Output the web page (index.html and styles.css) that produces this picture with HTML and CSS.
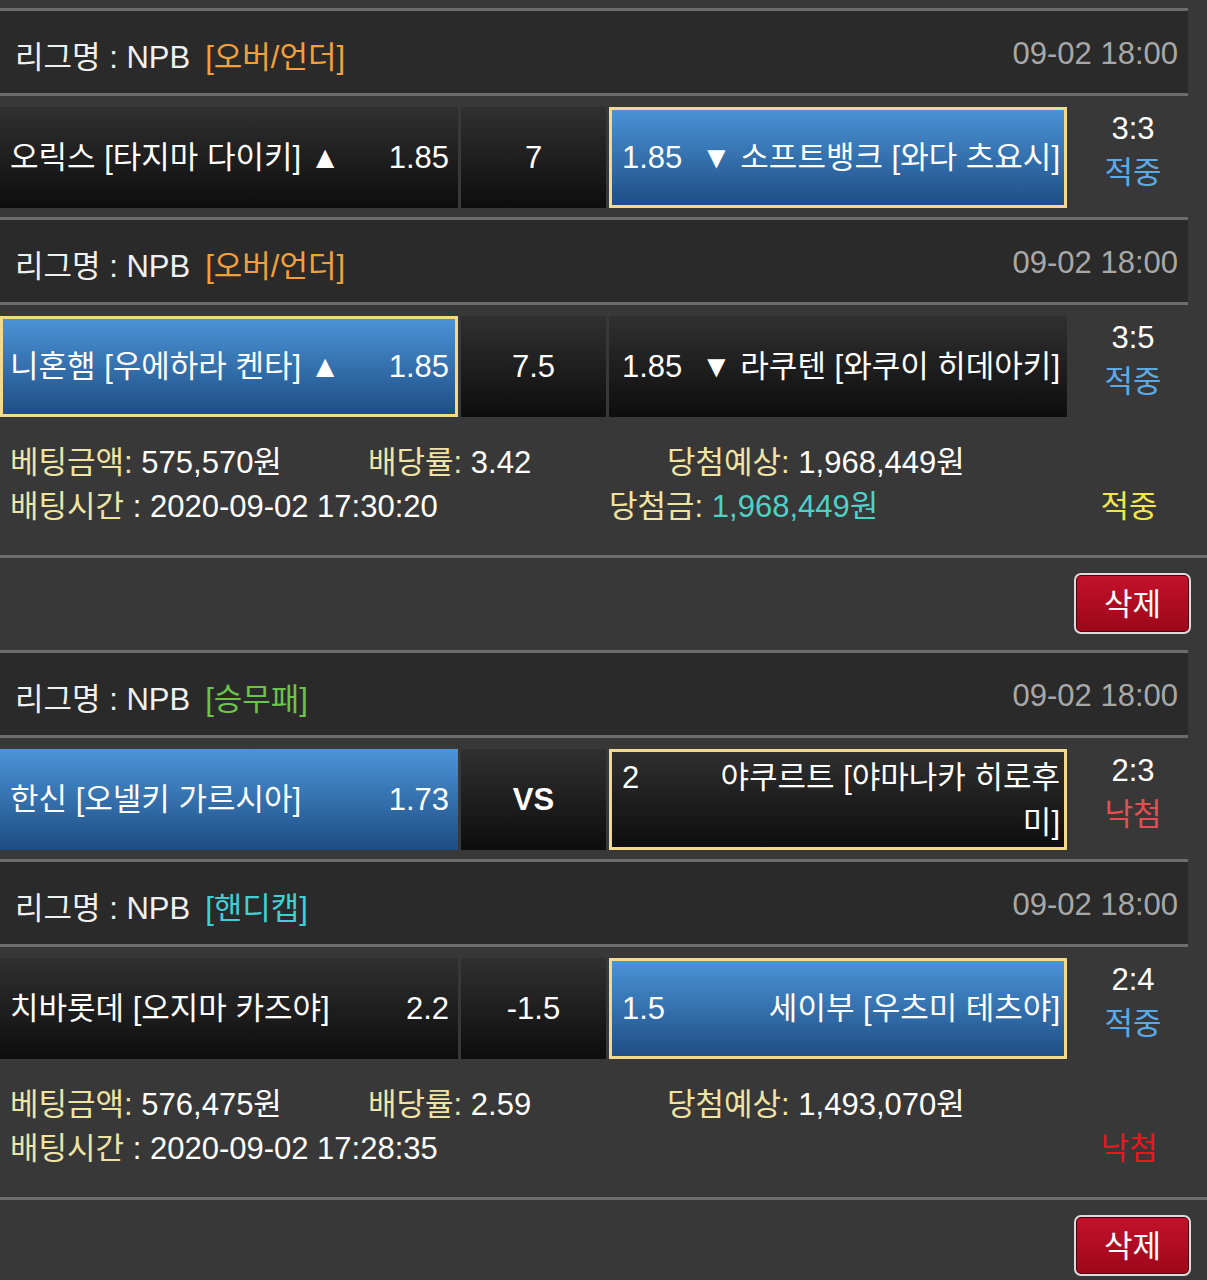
FILE: index.html
```html
<!DOCTYPE html>
<html lang="ko">
<head>
  <meta charset="UTF-8" />
  <title>배팅내역</title>
  <link rel="stylesheet" href="styles.css">
</head>
<body>
  <!-- 배팅 1 -->
  <div class="slip">
    <div class="league">
      <span>리그명 : NPB</span><span class="type ou">[오버/언더]</span>
      <span class="date">09-02 18:00</span>
    </div>
    <div class="match">
      <div class="cell home"><span class="team">오릭스 [타지마 다이키] ▲</span><span class="odd">1.85</span></div>
      <div class="cell mid">7</div>
      <div class="cell away pick win"><span class="odd">1.85</span><span class="team">▼ 소프트뱅크 [와다 츠요시]</span></div>
      <div class="score"><span>3:3</span><span class="hit">적중</span></div>
    </div>

    <div class="league">
      <span>리그명 : NPB</span><span class="type ou">[오버/언더]</span>
      <span class="date">09-02 18:00</span>
    </div>
    <div class="match">
      <div class="cell home pick win"><span class="team">니혼햄 [우에하라 켄타] ▲</span><span class="odd">1.85</span></div>
      <div class="cell mid">7.5</div>
      <div class="cell away"><span class="odd">1.85</span><span class="team">▼ 라쿠텐 [와쿠이 히데아키]</span></div>
      <div class="score"><span>3:5</span><span class="hit">적중</span></div>
    </div>

    <div class="info">
      <div class="info-row">
        <span class="amount"><em>베팅금액:</em> 575,570원</span>
        <span class="rate"><em>배당률:</em> 3.42</span>
        <span><em>당첨예상:</em> 1,968,449원</span>
      </div>
      <div class="info-row">
        <span class="time"><em>배팅시간</em> : 2020-09-02 17:30:20</span>
        <span class="payout"><em>당첨금:</em> <span class="money">1,968,449원</span></span>
        <span class="result win">적중</span>
      </div>
    </div>
  </div>
  <div class="del-bar"><button class="btn-del">삭제</button></div>

  <!-- 배팅 2 -->
  <div class="slip">
    <div class="league">
      <span>리그명 : NPB</span><span class="type wdl">[승무패]</span>
      <span class="date">09-02 18:00</span>
    </div>
    <div class="match">
      <div class="cell home pick"><span class="team">한신 [오넬키 가르시아]</span><span class="odd">1.73</span></div>
      <div class="cell mid vs">VS</div>
      <div class="cell away win"><span class="odd">2</span><span class="team">야쿠르트 [야마나카 히로후미]</span></div>
      <div class="score"><span>2:3</span><span class="miss">낙첨</span></div>
    </div>

    <div class="league">
      <span>리그명 : NPB</span><span class="type hc">[핸디캡]</span>
      <span class="date">09-02 18:00</span>
    </div>
    <div class="match">
      <div class="cell home"><span class="team">치바롯데 [오지마 카즈야]</span><span class="odd">2.2</span></div>
      <div class="cell mid">-1.5</div>
      <div class="cell away pick win"><span class="odd">1.5</span><span class="team">세이부 [우츠미 테츠야]</span></div>
      <div class="score"><span>2:4</span><span class="hit">적중</span></div>
    </div>

    <div class="info">
      <div class="info-row">
        <span class="amount"><em>베팅금액:</em> 576,475원</span>
        <span class="rate"><em>배당률:</em> 2.59</span>
        <span><em>당첨예상:</em> 1,493,070원</span>
      </div>
      <div class="info-row">
        <span class="time"><em>배팅시간</em> : 2020-09-02 17:28:35</span>
        <span class="payout"></span>
        <span class="result lose">낙첨</span>
      </div>
    </div>
  </div>
  <div class="del-bar"><button class="btn-del">삭제</button></div>
</body>
</html>
```

FILE: styles.css
```css
* {
  box-sizing: border-box;
}

body {
  margin: 0;
  padding-top: 8px;
  background: #383838;
  color: #fff;
  font-family: "Liberation Sans", "Noto Sans CJK KR", sans-serif;
  font-size: 31px;
  overflow: hidden;
}

.slip {
  width: 1188px;
}

/* 리그 헤더 */
.league {
  display: flex;
  align-items: center;
  height: 88px;
  padding: 4px 10px 0 15px;
  background: #2a2a2a;
  border-top: 3px solid #6d6d6d;
  border-bottom: 3px solid #6d6d6d;
  color: #f0f0f0;
}

.league .type {
  margin-left: 15px;
}

.type.ou { color: #f2a03c; }
.type.wdl { color: #6cc24a; }
.type.hc { color: #3fd0d6; }

.league .date {
  margin-left: auto;
  color: #a8a8a8;
}

/* 경기 행 */
.match {
  display: flex;
  gap: 3px;
  padding: 11px 0 9px;
}

.cell {
  height: 101px;
  display: flex;
  flex-wrap: wrap;
  align-content: center;
  align-items: baseline;
  line-height: 45px;
  background: linear-gradient(#303030, #0d0d0d);
  background-origin: border-box;
  border: 3px solid transparent;
}

.cell .team {
  flex: 1 1 0;
  min-width: 0;
}

.home {
  width: 458px;
  padding: 0 6px 0 7px;
}

.mid {
  width: 145px;
  justify-content: center;
}

.mid.vs {
  font-weight: bold;
}

.away {
  width: 458px;
  padding: 0 4px 0 10px;
}

.away .odd {
  min-width: 72px;
}

.away .team {
  text-align: right;
}

.cell.pick {
  background: linear-gradient(#4b95d9, #1e4c82);
  background-origin: border-box;
}

.cell.win {
  border-color: #f3d98c;
}

.score {
  width: 118px;
  display: flex;
  flex-direction: column;
  align-items: center;
  padding-left: 8px;
  line-height: 44px;
}

.hit { color: #5aaaea; }
.miss { color: #e45050; }

/* 배팅 정보 */
.info {
  height: 129px;
  padding: 15px 0 0 10px;
  line-height: 44px;
}

.info-row {
  display: flex;
}

.info em {
  font-style: normal;
  color: #efe4a4;
}

.amount { width: 358px; }
.rate { width: 299px; }
.time { width: 599px; }
.payout { flex: 1; }

.money { color: #4fd2c6; }

.result {
  width: 118px;
  text-align: center;
}

.result.win { color: #f0e84a; }
.result.lose { color: #e8161e; }

/* 삭제 */
.del-bar {
  height: 95px;
  display: flex;
  justify-content: flex-end;
  padding: 15px 16px 0 0;
  border-top: 3px solid #6d6d6d;
}

.btn-del {
  width: 117px;
  height: 61px;
  padding: 0 0 4px;
  background: linear-gradient(#c3122b, #9c0719);
  color: #fff;
  font-family: inherit;
  font-size: 31px;
  border: 2px solid #dcdcdc;
  border-radius: 7px;
  box-shadow: inset 0 0 0 1px #4e0010;
  cursor: pointer;
}
```
